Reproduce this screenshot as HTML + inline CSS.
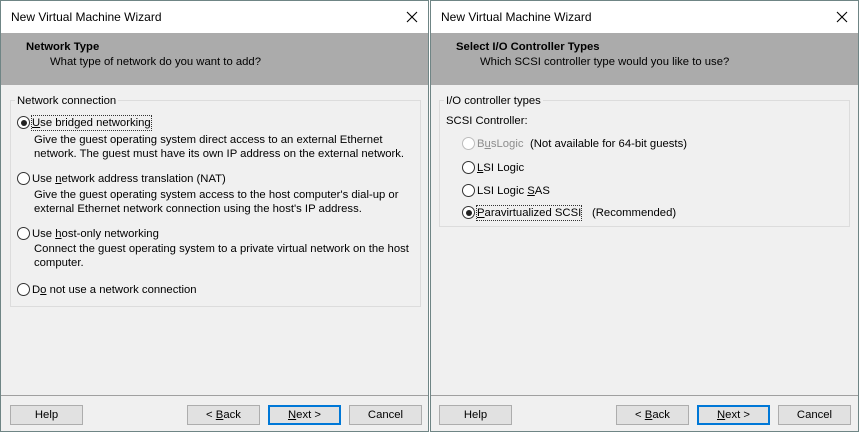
<!DOCTYPE html><html><head><style>
*{margin:0;padding:0;box-sizing:border-box}
body{width:859px;height:432px;background:#fff;font-family:"Liberation Sans",sans-serif;font-size:11.3px;color:#000;position:relative;overflow:hidden}
.win{position:absolute;top:0;width:429px;height:432px;border:1px solid #6f8585;background:#f0f0f0}
.tb{position:absolute;left:0;top:0;right:0;height:32px;background:#fff}
.tt{position:absolute;left:10px;top:9px;font-size:12px}
.x{position:absolute;right:10px;top:10px}
.hd{position:absolute;left:0;right:0;top:32px;height:52px;background:#ababab}
.h1{position:absolute;left:25px;top:8px;font-weight:bold}
.h2{position:absolute;left:49px;top:23px}
.gb{position:absolute;border:1px solid #dcdcdc}
.gl{position:absolute;background:#f0f0f0;padding:0 2px}
.t{position:absolute;white-space:nowrap;line-height:14px}
.r{position:absolute;width:13px;height:13px;border:1px solid #333;border-radius:50%;background:#fff}
.r.s::after{content:"";position:absolute;left:2.5px;top:2.5px;width:6px;height:6px;border-radius:50%;background:#222}
.r.d{border-color:#bcbcbc}
.sep{position:absolute;left:0;right:0;top:394px;border-top:1px solid #a0a0a0}
.b{position:absolute;top:404px;width:73px;height:20px;background:#e1e1e1;border:1px solid #adadad;text-align:center;line-height:18px}
.b.n{border:2px solid #0078d7;line-height:16px}
.f{outline:1px dotted #333}
</style></head><body>
<div class="win" style="left:0">
<div class="tb"><div class="tt">New Virtual Machine Wizard</div><svg class="x" width="12" height="12"><path d="M1 1L11 11M11 1L1 11" stroke="#000" stroke-width="1.1"/></svg></div>
<div class="hd"><div class="h1">Network Type</div><div class="h2">What type of network do you want to add?</div></div>
<div class="gb" style="left:9px;top:99px;width:411px;height:207px"></div>
<div class="gl t" style="left:14px;top:93px">Network connection</div>
<div class="r s" style="left:16px;top:115px"></div><div class="t f" style="left:31px;top:115px"><u>U</u>se bridged networking</div>
<div class="t" style="left:33px;top:132px">Give the guest operating system direct access to an external Ethernet<br>network. The guest must have its own IP address on the external network.</div>
<div class="r" style="left:16px;top:171px"></div><div class="t" style="left:31px;top:171px">Use <u>n</u>etwork address translation (NAT)</div>
<div class="t" style="left:33px;top:187px">Give the guest operating system access to the host computer's dial-up or<br>external Ethernet network connection using the host's IP address.</div>
<div class="r" style="left:16px;top:226px"></div><div class="t" style="left:31px;top:226px">Use <u>h</u>ost-only networking</div>
<div class="t" style="left:33px;top:241px">Connect the guest operating system to a private virtual network on the host<br>computer.</div>
<div class="r" style="left:16px;top:282px"></div><div class="t" style="left:31px;top:282px">D<u>o</u> not use a network connection</div>
<div class="sep"></div>
<div class="b" style="left:9px">Help</div>
<div class="b" style="left:186px">&lt; <u>B</u>ack</div>
<div class="b n" style="left:267px"><u>N</u>ext &gt;</div>
<div class="b" style="left:348px">Cancel</div>
</div>
<div class="win" style="left:430px">
<div class="tb"><div class="tt">New Virtual Machine Wizard</div><svg class="x" width="12" height="12"><path d="M1 1L11 11M11 1L1 11" stroke="#000" stroke-width="1.1"/></svg></div>
<div class="hd"><div class="h1">Select I/O Controller Types</div><div class="h2">Which SCSI controller type would you like to use?</div></div>
<div class="gb" style="left:8px;top:99px;width:411px;height:127px"></div>
<div class="gl t" style="left:13px;top:93px">I/O controller types</div>
<div class="t" style="left:15px;top:113px">SCSI Controller:</div>
<div class="r d" style="left:31px;top:136px"></div><div class="t" style="left:46px;top:136px;color:#8d8d8d">B<u>u</u>sLogic</div><div class="t" style="left:99px;top:136px">(Not available for 64-bit guests)</div>
<div class="r" style="left:31px;top:160px"></div><div class="t" style="left:46px;top:160px"><u>L</u>SI Logic</div>
<div class="r" style="left:31px;top:183px"></div><div class="t" style="left:46px;top:183px">LSI Logic <u>S</u>AS</div>
<div class="r s" style="left:31px;top:205px"></div><div class="t f" style="left:46px;top:205px"><u>P</u>aravirtualized SCSI</div><div class="t" style="left:161px;top:205px">(Recommended)</div>
<div class="sep"></div>
<div class="b" style="left:8px">Help</div>
<div class="b" style="left:185px">&lt; <u>B</u>ack</div>
<div class="b n" style="left:266px"><u>N</u>ext &gt;</div>
<div class="b" style="left:347px">Cancel</div>
</div>
</body></html>
